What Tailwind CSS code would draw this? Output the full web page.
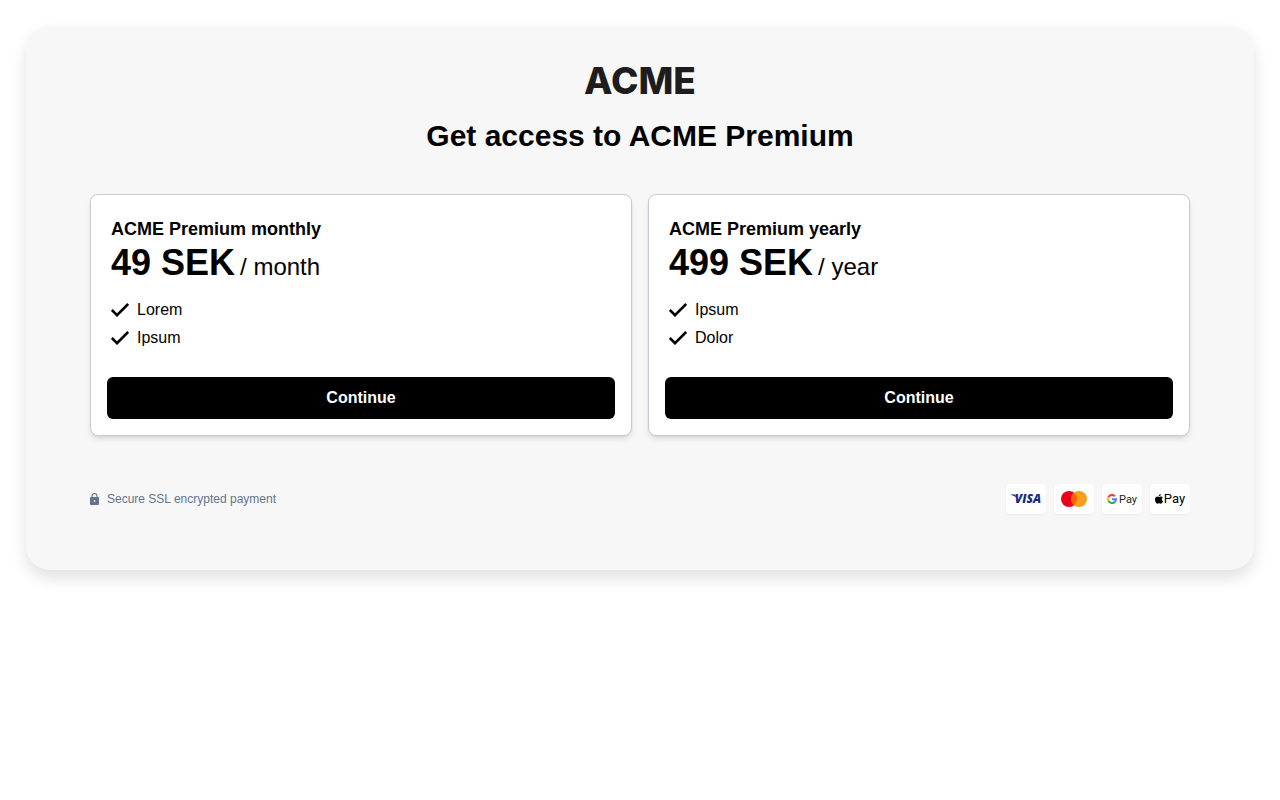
<!DOCTYPE html>
<html lang="en">
<head>
<meta charset="utf-8">
<meta name="viewport" content="width=device-width, initial-scale=1">
<title>ACME Premium</title>
<script src="https://cdn.jsdelivr.net/npm/@tailwindcss/browser@4"></script>
</head>
<body class="bg-white text-black font-['Liberation_Sans',Arial,sans-serif]">
<svg class="hidden" aria-hidden="true">
  <symbol id="check" viewBox="0 0 18 14"><path d="M.8 7 6 12.2 17.200 1" fill="none" stroke="currentColor" stroke-width="2.6"/></symbol>
</svg>
<main class="m-[26px] rounded-3xl bg-[#f7f7f7] px-16 pt-8 pb-14 shadow-[0_8px_16px_rgba(0,0,0,0.12)]">
  <header class="text-center">
    <div class="font-[Inter,sans-serif] text-[37px] leading-[46px] font-extrabold text-[#1d1d1d]">ACME</div>
    <h1 class="mt-3.5 text-3xl leading-9 font-bold">Get access to ACME Premium</h1>
  </header>

  <div class="mt-10 grid grid-cols-1 gap-4 sm:grid-cols-2">
    <section class="rounded-lg border border-[#c9cad1] bg-white p-4 shadow-md">
      <div class="px-1 pt-1">
        <h2 class="text-lg leading-7 font-bold">ACME Premium monthly</h2>
        <p class="text-2xl leading-10"><span class="text-4xl leading-10 font-bold">49 SEK</span><span class="ml-[5px]">/ month</span></p>
        <ul class="mt-[9px] text-base leading-7">
          <li class="flex items-center gap-2"><svg class="h-3.5 w-[18px]"><use href="#check"/></svg>Lorem</li>
          <li class="flex items-center gap-2"><svg class="h-3.5 w-[18px]"><use href="#check"/></svg>Ipsum</li>
        </ul>
      </div>
      <button type="button" class="mt-[25px] h-[42px] w-full rounded-md bg-black text-base font-bold text-white">Continue</button>
    </section>
    <section class="rounded-lg border border-[#c9cad1] bg-white p-4 shadow-md">
      <div class="px-1 pt-1">
        <h2 class="text-lg leading-7 font-bold">ACME Premium yearly</h2>
        <p class="text-2xl leading-10"><span class="text-4xl leading-10 font-bold">499 SEK</span><span class="ml-[5px]">/ year</span></p>
        <ul class="mt-[9px] text-base leading-7">
          <li class="flex items-center gap-2"><svg class="h-3.5 w-[18px]"><use href="#check"/></svg>Ipsum</li>
          <li class="flex items-center gap-2"><svg class="h-3.5 w-[18px]"><use href="#check"/></svg>Dolor</li>
        </ul>
      </div>
      <button type="button" class="mt-[25px] h-[42px] w-full rounded-md bg-black text-base font-bold text-white">Continue</button>
    </section>
  </div>

  <footer class="mt-12 flex items-center justify-between">
    <p class="flex items-center gap-2 text-xs text-[#64748b]">
      <svg class="h-3 w-[9px]" viewBox="0 0 9 12" aria-hidden="true"><path d="M2 5V3a2.5 2.5 0 0 1 5 0v2" fill="none" stroke="currentColor" stroke-width="1.1"/><rect y="4" width="9" height="8" rx="1" fill="currentColor"/><path d="M4.500 7v2" stroke="#f7f7f7" stroke-width="1.3"/></svg>
      Secure SSL encrypted payment
    </p>
    <div class="flex gap-2">
      <div class="flex h-[30px] w-10 items-center justify-center rounded bg-white shadow-xs">
        <svg class="h-[30px] w-10" viewBox="0 0 40 30" role="img" aria-label="Visa"><path d="M5 10.500h4l2 3.500C9.500 12.500 7.500 11.300 5 10.900Z" fill="#172b85"/><text x="22" y="19" text-anchor="middle" fill="#172b85" class="font-['Open_Sans',sans-serif] text-[12px] font-extrabold italic">VISA</text></svg>
      </div>
      <div class="flex h-[30px] w-10 items-center justify-center rounded bg-white shadow-xs">
        <svg class="h-[30px] w-10" viewBox="0 0 40 30" role="img" aria-label="Mastercard"><circle cx="15" cy="15" r="8" fill="#eb001b"/><circle cx="25" cy="15" r="8" fill="#f79e1b"/><path d="M20 8.760a8 8 0 0 1 0 12.480 8 8 0 0 1 0-12.480Z" fill="#ff5f00"/></svg>
      </div>
      <div class="flex h-[30px] w-10 items-center justify-center gap-0.5 rounded bg-white shadow-xs">
        <svg class="size-2.5" viewBox="0 0 24 24" fill="none" stroke-width="5" aria-hidden="true"><path stroke="#ea4335" d="M3.500 7.500A9.500 9.500 0 0 1 19 5.500"/><path stroke="#fbbc04" d="M3.500 16.500a9.500 9.500 0 0 1 0-9"/><path stroke="#34a853" d="M18.500 19A9.500 9.500 0 0 1 3.500 16.500"/><path stroke="#4285f4" d="M12 12.500h9.500c0 2.800-1 5-3 6.500"/></svg>
        <span class="pt-px font-[Roboto,sans-serif] text-[11px] leading-3 text-[#202124]">Pay</span>
      </div>
      <div class="flex h-[30px] w-10 items-center justify-center gap-px rounded bg-white text-black shadow-xs">
        <svg class="h-2.5 w-2" viewBox="0 0 16 20" aria-hidden="true"><path fill="currentColor" d="M11.500 0c.2 2.400-1.700 4.500-3.900 4.400C7.400 2.200 9.300.2 11.500 0ZM15.600 6.800c-3 1.900-2.500 5.900.4 7.100-.8 2.500-2.400 5.400-4.300 5.500-1.300 0-1.700-.8-3.300-.8s-2.100.8-3.300.8C2.400 19.400-.2 14.200 0 10.500c.2-4.200 3-5.700 5.100-5.500 1.400.1 2.500.9 3.300.9s2-.9 3.700-1c1.400 0 2.700.6 3.500 1.900Z"/></svg>
        <span class="font-[Roboto,sans-serif] text-[13px] leading-3">Pay</span>
      </div>
    </div>
  </footer>
</main>
</body>
</html>
